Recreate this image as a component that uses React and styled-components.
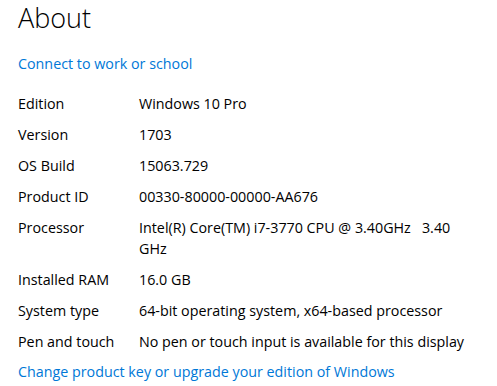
import React from "react";
import styled, { createGlobalStyle } from "styled-components";

const Global = createGlobalStyle`
  html, body { margin: 0; padding: 0; background: #ffffff; }
  body { font-family: "Open Sans", "Noto Sans", sans-serif; color: #000; }
`;

const Page = styled.div`
  width: 497px;
  height: 386px;
  overflow: hidden;
  padding: 0 0 0 18px;
  box-sizing: border-box;
  display: flex;
  flex-direction: column;
  align-items: flex-start;
`;

const Title = styled.h1`
  margin: -1px 0 0 0;
  font-size: 27px;
  font-weight: 300;
  line-height: 38px;
  letter-spacing: 0;
`;

const Link = styled.a`
  color: #0078d7;
  font-size: 14.3px;
  line-height: 21px;
  text-decoration: none;
  margin-top: ${(p) => p.$top}px;
  cursor: pointer;
`;

const Table = styled.div`
  display: grid;
  grid-template-columns: 121px 1fr;
  row-gap: 10px;
  margin-top: 19px;
  font-size: 14.3px;
  line-height: 21px;
`;

const Label = styled.div``;
const Value = styled.div``;

const rows = [
  ["Edition", "Windows 10 Pro"],
  ["Version", "1703"],
  ["OS Build", "15063.729"],
  ["Product ID", "00330-80000-00000-AA676"],
  ["Processor", <>Intel(R) Core(TM) i7-3770 CPU @ 3.40GHz&nbsp;&nbsp; 3.40<br />GHz</>],
  ["Installed RAM", "16.0 GB"],
  ["System type", "64-bit operating system, x64-based processor"],
  ["Pen and touch", "No pen or touch input is available for this display"],
];

export default function App() {
  return (
    <>
      <Global />
      <Page>
        <Title>About</Title>
        <Link $top={16}>Connect to work or school</Link>
        <Table>
          {rows.map(([l, v]) => (
            <React.Fragment key={l}>
              <Label>{l}</Label>
              <Value>{v}</Value>
            </React.Fragment>
          ))}
        </Table>
        <Link $top={9}>Change product key or upgrade your edition of Windows</Link>
      </Page>
    </>
  );
}
